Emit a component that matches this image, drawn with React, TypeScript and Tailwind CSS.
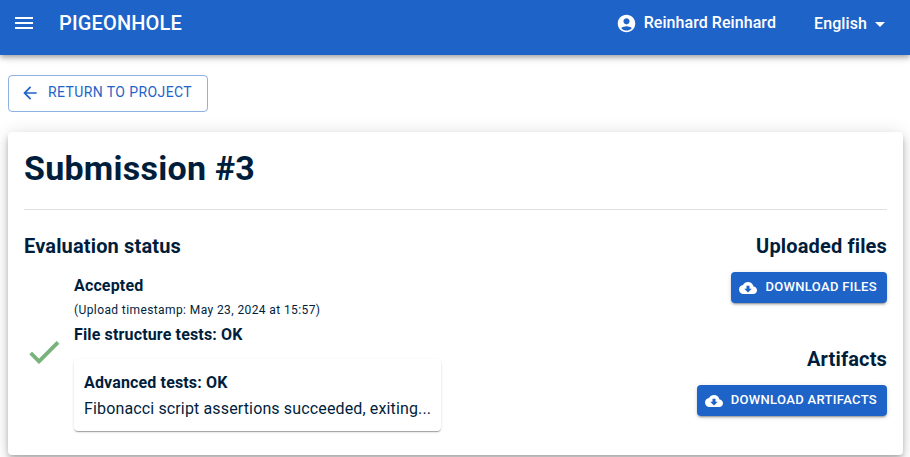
import type { ReactNode } from "react";

const paths = {
  menu: "M3 18h18v-2H3zm0-5h18v-2H3zm0-7v2h18V6z",
  account:
    "M12 2C6.48 2 2 6.48 2 12s4.48 10 10 10 10-4.48 10-10S17.52 2 12 2m0 4c1.93 0 3.5 1.57 3.5 3.5S13.93 13 12 13s-3.5-1.57-3.5-3.5S10.07 6 12 6m0 14c-2.03 0-4.43-.82-6.14-2.88C7.55 15.8 9.68 15 12 15s4.45.8 6.14 2.12C16.43 19.18 14.03 20 12 20",
  back: "M20 11H7.83l5.59-5.59L12 4l-8 8 8 8 1.41-1.41L7.83 13H20z",
  check: "M9 16.17 4.83 12l-1.42 1.41L9 19 21 7l-1.41-1.41z",
  caret: "m7 10 5 5 5-5z",
  cloud:
    "M19.35 10.04C18.67 6.59 15.64 4 12 4 9.11 4 6.6 5.64 5.35 8.04 2.34 8.36 0 10.91 0 14c0 3.31 2.69 6 6 6h13c2.76 0 5-2.24 5-5 0-2.64-2.05-4.78-4.65-4.96M17 13l-5 5-5-5h3V9h4v4z",
};

function Icon({ name, className }: { name: keyof typeof paths; className: string }) {
  return (
    <svg viewBox="0 0 24 24" className={`shrink-0 fill-current ${className}`} aria-hidden="true">
      <path d={paths[name]} />
    </svg>
  );
}

function DownloadSection({ title, children }: { title: string; children: ReactNode }) {
  return (
    <section className="flex flex-col items-end">
      <h2 className="text-[20px] leading-8 font-bold tracking-[0.15px]">{title}</h2>
      <button className="mt-[10px] flex h-[31px] items-center rounded bg-[#1e63c8] pr-[10px] pl-2 text-[13px] font-medium tracking-[0.33px] text-white uppercase shadow-[0_3px_1px_-2px_rgba(0,0,0,0.2),0_2px_2px_0_rgba(0,0,0,0.14),0_1px_5px_0_rgba(0,0,0,0.12)]">
        <Icon name="cloud" className="mt-px mr-2 size-[18px]" />
        <span className="pb-px whitespace-nowrap">{children}</span>
      </button>
    </section>
  );
}

export default function App() {
  return (
    <div className="h-[457px] overflow-hidden bg-white font-[Roboto,sans-serif] text-[#001e3c]">
      <header className="flex h-[55px] items-start bg-[#1e63c8] text-white shadow-[0_2px_4px_-1px_rgba(0,0,0,0.2),0_4px_5px_0_rgba(0,0,0,0.14),0_1px_10px_0_rgba(0,0,0,0.12)]">
        <Icon name="menu" className="mt-[11px] ml-3 size-6" />
        <div className="mt-[7px] ml-[23px] text-[20px] leading-8 font-medium tracking-[0.15px]">PIGEONHOLE</div>
        <div className="mt-[11px] ml-auto flex h-6 items-center text-base font-medium tracking-[0.06px]">
          <Icon name="account" className="mr-[7px] size-[21px]" />
          <span>Reinhard Reinhard</span>
        </div>
        <div className="mt-[12px] mr-[18px] ml-[38px] flex h-6 items-center text-base font-medium tracking-[0.1px]">
          <span>English</span>
          <Icon name="caret" className="mb-px ml-px size-6" />
        </div>
      </header>
      <main className="pt-5 pr-[7px] pl-2">
        <button className="flex h-[37px] w-[200px] items-center rounded border border-[#1e63c8]/50 pl-[11px] text-[14px] tracking-[0.4px] text-[#1e63c8] uppercase">
          <Icon name="back" className="mr-2 mb-px size-5" />
          <span className="pb-[2px] whitespace-nowrap">Return to project</span>
        </button>
        <article className="mt-5 h-[323px] rounded bg-white px-4 shadow-[0_3px_5px_-1px_rgba(0,0,0,0.2),0_6px_10px_0_rgba(0,0,0,0.14),0_1px_18px_0_rgba(0,0,0,0.12)]">
          <h1 className="h-[77px] pt-[15px] text-[34px] leading-[42px] font-bold tracking-[0.25px]">Submission #3</h1>
          <hr className="border-[#e0e0e0]" />
          <div className="flex justify-between pt-5">
            <section>
              <h2 className="text-[20px] leading-8 font-bold tracking-[0.15px]">Evaluation status</h2>
              <div className="mt-[12px] flex items-center">
                <Icon name="check" className="mr-[10px] mb-[2px] size-10 stroke-current stroke-[0.4] text-[#77b37a]" />
                <div>
                  <p className="text-base leading-6 font-bold tracking-[0.15px]">Accepted</p>
                  <p className="text-[12px] leading-[25px] tracking-[0.4px]">(Upload timestamp: May 23, 2024 at 15:57)</p>
                  <p className="text-base leading-6 font-bold tracking-[0.15px]">File structure tests: OK</p>
                  <div className="mt-3 h-[72px] w-[367px] rounded px-[10px] pt-[11px] whitespace-nowrap shadow-[0_2px_1px_-1px_rgba(0,0,0,0.2),0_1px_1px_0_rgba(0,0,0,0.14),0_1px_3px_0_rgba(0,0,0,0.12)]">
                    <p className="text-base leading-[26px] font-bold tracking-[0.15px]">Advanced tests: OK</p>
                    <p className="text-base leading-[26px] tracking-[0.14px]">Fibonacci script assertions succeeded, exiting...</p>
                  </div>
                </div>
              </div>
            </section>
            <div className="flex flex-col gap-10">
              <DownloadSection title="Uploaded files">Download files</DownloadSection>
              <DownloadSection title="Artifacts">Download artifacts</DownloadSection>
            </div>
          </div>
        </article>
      </main>
    </div>
  );
}
